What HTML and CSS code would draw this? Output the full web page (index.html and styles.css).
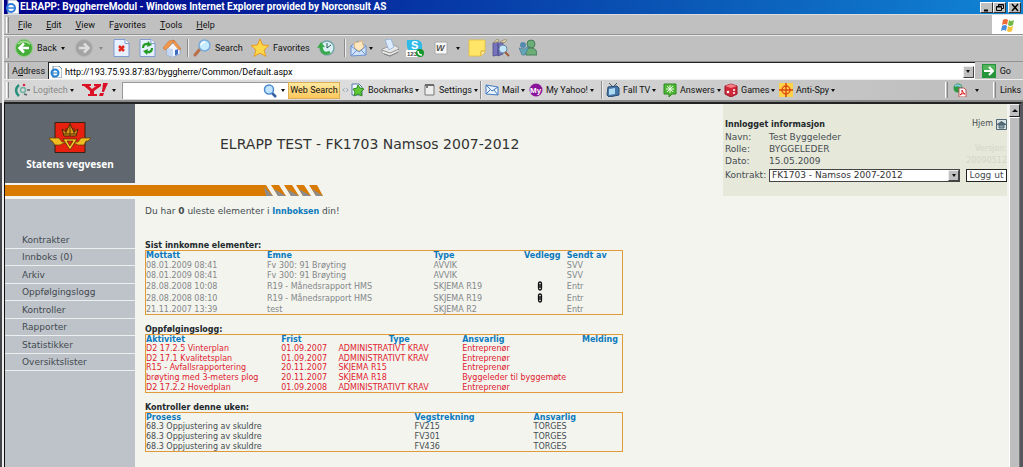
FILE: index.html
```html
<!DOCTYPE html>
<html lang="no">
<head>
<meta charset="utf-8">
<title>ELRAPP: ByggherreModul</title>
<link rel="stylesheet" href="styles.css">
</head>
<body>
<div class="desktop">
<div class="window">
  <header class="titlebar">
    <svg class="i14" viewBox="0 0 14 14"><path d="M3 0h8l3 3v11H3z" fill="#fff" stroke="#9ab"/><circle cx="6" cy="8" r="4" fill="none" stroke="#2c7be0" stroke-width="2"/><path d="M3 8h6" stroke="#2c7be0" stroke-width="1.5"/></svg>
    <span class="window-title">ELRAPP: ByggherreModul - Windows Internet Explorer provided by Norconsult AS</span>
    <div class="window-buttons">
      <button aria-label="Minimize"><svg viewBox="0 0 10 9"><path d="M2 7.500h4" stroke="#000" stroke-width="2"/></svg></button>
      <button aria-label="Restore"><svg viewBox="0 0 10 9"><path d="M3.500 3V1.500h5v4H7M1.500 3.500h5v4h-5zM1.500 4h5M3.500 2h5" fill="none" stroke="#000"/></svg></button>
      <button class="close" aria-label="Close"><svg viewBox="0 0 10 9"><path d="M2 1l6 7M8 1L2 8" stroke="#000" stroke-width="1.500"/></svg></button>
    </div>
  </header>

  <nav class="menubar">
    <i class="grip"></i>
    <button><u>F</u>ile</button><button><u>E</u>dit</button><button><u>V</u>iew</button><button>F<u>a</u>vorites</button><button><u>T</u>ools</button><button><u>H</u>elp</button>
    <span class="flag"><svg viewBox="0 0 16 16"><path d="M3 3q3-2 5 0L7 8Q5 6 2 8z" fill="#ee6b35"/><path d="M9 3q2 2 5 0l-1 5q-3 2-5 0z" fill="#72b844"/><path d="M2 9q3-2 5 0l-1 5q-2-2-5 0z" fill="#4a8be0"/><path d="M8 9q2 2 5 0l-1 5q-3 2-5 0z" fill="#f6c238"/></svg></span>
  </nav>

  <div class="toolbar">
    <i class="grip"></i>
    <button><svg class="i18" viewBox="0 0 18 18"><circle cx="9" cy="9" r="8.500" fill="#43ad37" stroke="#8fce83"/><path d="M3 5q6-5 12 0" stroke="#9ddb8d" stroke-width="2" fill="none"/><path d="M14 9H5M9 4.500L4.500 9 9 13.500" fill="none" stroke="#fff" stroke-width="2.500"/></svg><span class="back">Back</span><b class="caret"></b></button>
    <button aria-label="Forward"><svg class="i18" viewBox="0 0 18 18"><circle cx="9" cy="9" r="8.500" fill="#a4a4a4" stroke="#b4b4b4"/><path d="M4 9h9M9 4.500L13.500 9 9 13.500" fill="none" stroke="#ddd" stroke-width="2.500"/></svg><b class="caret faded"></b></button>
    <button aria-label="Stop"><svg class="i18" viewBox="0 0 18 18"><path d="M1 .5h11l4 4v13H1z" fill="#e6f0ff" stroke="#7f9bd0"/><path d="M12 .5v4h4" fill="#fff" stroke="#7f9bd0"/><path d="M6 7l5 5M11 7l-5 5" stroke="#e1291c" stroke-width="2.500"/></svg></button>
    <button aria-label="Refresh"><svg class="i18" viewBox="0 0 18 18"><path d="M1 .5h11l4 4v13H1z" fill="#e6f0ff" stroke="#7f9bd0"/><path d="M12 .5v4h4" fill="#fff" stroke="#7f9bd0"/><path d="M4 9q0-5 6-4M13 9q0 5-6 4" fill="none" stroke="#269b26" stroke-width="2.200"/><path d="M9 2l4 4-5 2zM8 16l-4-4 5-2z" fill="#269b26"/></svg></button>
    <button aria-label="Home"><svg class="i18" viewBox="0 0 18 18"><path d="M4 9l7-6 6 6v6l-7 3-6-2z" fill="#f1f6ff" stroke="#7f99c8" stroke-width=".7"/><path d="M10 10v8l-6-2V9z" fill="#c4d7f2"/><path d="M0 9l6-7 5-1-5 7-4 3zM11 1l7 9-2 1-6-7z" fill="#f2994c" stroke="#c96f35" stroke-width=".6"/><path d="M12 11l3-.8v5l-3 1.300z" fill="#3b6cc0"/></svg></button>
    <i class="rule"></i>
    <button><svg class="i18" viewBox="0 0 18 18"><path d="M7 10l-5 6" stroke="#b86f49" stroke-width="3" stroke-linecap="round"/><circle cx="11.500" cy="6.500" r="5.500" fill="#c5edff" stroke="#79abd8" stroke-width="1.500"/><path d="M8 6q1-3 4-3" stroke="#fff" stroke-width="1.500" fill="none"/></svg><span>Search</span></button>
    <button><svg class="i18" viewBox="0 0 18 18"><path d="M9 0l2.500 6 6.500.5-5 4.500 2 6.500L9 14l-6 3.500L5 11 0 6.500 6.500 6z" fill="#ffd84a" stroke="#e89b22"/></svg><span>Favorites</span></button>
    <button aria-label="History"><svg class="i18" viewBox="0 0 18 18"><circle cx="10" cy="9" r="7" fill="#d9f1f6" stroke="#77a6a8" stroke-width="1.500"/><path d="M10 4v5l4-3" fill="none" stroke="#355"/><path d="M13 13Q5 17 4 7" fill="none" stroke="#37a946" stroke-width="3"/><path d="M0 9l4-6 4 5z" fill="#37a946"/></svg></button>
    <i class="rule"></i>
    <button aria-label="Mail"><svg class="i18" viewBox="0 0 18 18"><path d="M1 7l7-5 8 5v9l-15 1z" fill="#cfe3ff" stroke="#6b91cc"/><path d="M4 4l8-2 2 7-5 3-4-2z" fill="#ffe8c0" stroke="#dfb579"/><path d="M1 7l8 6 7-6M1 17l6-6M16 16l-5-5" fill="none" stroke="#6b91cc"/></svg><b class="caret tight"></b></button>
    <button aria-label="Print"><svg class="i18" viewBox="0 0 18 18"><path d="M1 10l12-4 5 3v4l-9 4-8-3z" fill="#e8e8e8" stroke="#888" stroke-width=".7"/><path d="M4 1l6-1 3 8-5 3z" fill="#dcecff" stroke="#87a9d9" stroke-width=".7"/><path d="M1 11l8 3 9-4M3 15l6 2 8-4" fill="none" stroke="#777" stroke-width=".8"/></svg></button>
    <button aria-label="Skype"><svg class="i18" viewBox="0 0 18 18"><path d="M1 1h7q6-1 8 4v7H3Q0 8 1 1z" fill="#31b9e8"/><text x="5" y="10" class="svg-bold" font-size="11" fill="#fff">S</text><path d="M0 11h12v7H0z" fill="#fff"/><text x="1" y="17" class="svg-bold" font-size="6" fill="#444">123</text><circle cx="14" cy="14" r="4" fill="#17962c"/><path d="M12 12q0 4 4 4" stroke="#fff" stroke-width="1.500" fill="none"/></svg></button>
    <button aria-label="Word"><svg class="i14" viewBox="0 0 14 14"><path d="M1 1h12v12H1z" fill="#f7f7f7" stroke="#aaa"/><text x="2" y="10" class="svg-bold" font-size="9" font-style="italic" fill="#555">W</text></svg><b class="caret far"></b></button>
    <button aria-label="Note"><svg class="i18" viewBox="0 0 18 18"><path d="M1 1h16v12l-4 4H1z" fill="#ffe669" stroke="#e5bd37" stroke-width=".8"/><path d="M17 12h-4v5" fill="#fff4a8" stroke="#d7a728"/></svg></button>
    <button aria-label="Research"><svg class="i18" viewBox="0 0 18 18"><path d="M1 4l5-2v14l-5 1zM6 5l5-3v13l-5 2z" fill="#7774bd" stroke="#4b4c8c" stroke-width=".8"/><path d="M1 4l4-4 2 1-1 2zM8 3l5-3 2 1-3 3z" fill="#d9cba0" stroke="#877b62" stroke-width=".6"/><circle cx="11" cy="10" r="4" fill="#c4e5fa" stroke="#6888a5"/><path d="M13 13l4 4" stroke="#9d5b39" stroke-width="2"/></svg></button>
    <button aria-label="Messenger"><svg class="i18" viewBox="0 0 18 18"><circle cx="12" cy="5" r="4" fill="#6dad78" stroke="#477d56"/><path d="M7 16q-2-7 5-7 6 0 6 7z" fill="#6dad78" stroke="#477d56"/><circle cx="4" cy="6" r="3" fill="#558aaf"/><path d="M0 9l5 1 5-3-2 5-2 4H3z" fill="#66a5b8" stroke="#3f728d" stroke-width=".6"/></svg></button>
  </div>

  <form class="addressbar">
    <i class="grip"></i>
    <label for="address">A<u>d</u>dress</label>
    <div class="address-box">
      <svg class="i12" viewBox="0 0 12 12"><path d="M3 0h6l3 3v9H3z" fill="#fff" stroke="#789"/><circle cx="5" cy="7" r="3.500" fill="none" stroke="#2683d4" stroke-width="2"/><path d="M2 7h6" stroke="#2683d4"/></svg>
      <input id="address" value="http://193.75.93.87:83/byggherre/Common/Default.aspx">
      <button type="button" class="drop" aria-label="Show addresses"><b class="caret"></b></button>
    </div>
    <button type="button" class="go"><svg class="i14" viewBox="0 0 14 14"><path d="M0 0h14v14H0z" fill="#26943a"/><path d="M1 1h12v5H1z" fill="#52b55b"/><path d="M2 7h9M7 3l4 4-4 4" fill="none" stroke="#fff" stroke-width="2"/></svg><span>Go</span></button>
  </form>

  <div class="linkbar">
    <i class="grip"></i>
    <button class="muted"><svg class="i16" viewBox="0 0 16 16"><path d="M5 3Q-1 8 5 14" fill="none" stroke="#278f7b" stroke-width="2.500"/><circle cx="9" cy="8" r="2.500" fill="none" stroke="#6fb5a5" stroke-width="1.500"/><circle cx="10" cy="3" r="1.300" fill="#d24"/><path d="M10 12l3 1M13 8h3" stroke="#566" stroke-width="1.500"/></svg><span>Logitech</span><b class="caret"></b></button>
    <button aria-label="Yahoo"><svg class="yahoo" viewBox="0 0 26 14"><path d="M0 1h9v2H7l3 3 4-3h-2V1h7v2l-7 5v3h3v2H6v-2h2V8L2 3H0z" fill="#db1026"/><path d="M21 0h5l-4 9h-2zM18 10h4l-1 3h-4z" fill="#db1026"/></svg><b class="caret"></b></button>
    <div class="search-box"><input aria-label="Search the web"><svg class="i14" viewBox="0 0 14 14"><path d="M9 9l4 4" stroke="#345f9f" stroke-width="2.500"/><circle cx="6" cy="5.500" r="4.500" fill="#c3e4ff" stroke="#4c8ad0" stroke-width="1.500"/></svg><b class="caret"></b></div>
    <button class="web-search">Web Search</button>
    <svg class="splitter" viewBox="0 0 10 8"><path d="M4 2L2 4l2 2M6 2l2 2-2 2" fill="none" stroke="#8f9cae"/></svg>
    <button><svg class="i14" viewBox="0 0 14 14"><path d="M1 1h7l3 3v8H1z" fill="#f4f7ff" stroke="#5979a5"/><path d="M7 2l2 3 4 1-3 3 1 4-4-2-4 2 1-4-2-3 4-1z" fill="#61c836" stroke="#2d8c22"/></svg><span>Bookmarks</span><b class="caret"></b></button>
    <button><svg class="i12" viewBox="0 0 12 12"><path d="M1 1h9v10H1z" fill="#eee" stroke="#777"/><path d="M1 1h9M2 3h2" stroke="#555" stroke-width="1.500"/></svg><span>Settings</span><b class="caret tight"></b></button>
    <i class="rule"></i>
    <button><svg class="i14" viewBox="0 0 14 14"><path d="M1 2l12 2v8L1 11z" fill="#eaf4ff" stroke="#477bbd"/><path d="M1 2l6 6 6-4M1 11l4-4M13 12L9 7" fill="none" stroke="#477bbd"/></svg><span>Mail</span><b class="caret"></b></button>
    <button><svg class="i14" viewBox="0 0 14 14"><circle cx="7" cy="7" r="6.500" fill="#8a149a"/><text x="1" y="10" class="svg-bold" font-size="8" fill="#fff">My</text></svg><span>My Yahoo!</span><b class="caret"></b></button>
    <i class="rule"></i>
    <button><svg class="i14" viewBox="0 0 14 14"><path d="M3 0l4 4 4-4" fill="none" stroke="#456"/><path d="M2 4l9-1 2 2v7l-10 2-2-2z" fill="#4676a8" stroke="#294c73"/><path d="M3 6l6-1v6l-6 1z" fill="#add9f2"/></svg><span>Fall TV</span><b class="caret"></b></button>
    <button><svg class="i14" viewBox="0 0 14 14"><path d="M1 1h12v10H9l-3 3v-3H1z" fill="#51b837" stroke="#298820"/><path d="M7 2v8M3 6h8M4 3l6 6M10 3L4 9" stroke="#efffe8"/></svg><span>Answers</span><b class="caret"></b></button>
    <button><svg class="i14" viewBox="0 0 14 14"><path d="M7 1l6 2v8l-6 3-6-3V3z" fill="#cf2939" stroke="#9a1424"/><path d="M1 3l6 2 6-2-6-2z" fill="#f48086"/><circle cx="4" cy="9" r="1.300" fill="#fff"/><circle cx="10" cy="7" r="1" fill="#fff"/><circle cx="10" cy="10" r="1" fill="#fff"/></svg><span>Games</span><b class="caret"></b></button>
    <button><svg class="i14" viewBox="0 0 14 14"><path d="M0 0h14v14H0z" fill="#ffd247"/><circle cx="7" cy="7" r="4" fill="none" stroke="#e25016" stroke-width="1.500"/><path d="M7 0v14M0 7h14" stroke="#d94812" stroke-width="1.500"/></svg><span>Anti-Spy</span><b class="caret tight"></b></button>
    <i class="grip"></i>
    <button aria-label="Convert"><svg class="i14" viewBox="0 0 14 14"><circle cx="5" cy="5" r="4.500" fill="#2c9a43"/><path d="M2 3q4-2 6 1" stroke="#8cc4ed" stroke-width="2" fill="none"/><path d="M6 5h5l2 2v7H6z" fill="#fff" stroke="#b55"/><path d="M7 12q3-2 2-5 1 3 3 4-3-1-5 1" fill="none" stroke="#d22"/></svg><b class="caret far"></b></button>
    <i class="grip"></i>
    <span class="links">Links</span>
  </div>

  <div class="viewport">
    <div class="page">
      <header class="page-header">
        <div class="brand">
          <svg class="crest" viewBox="0 0 42 31"><path d="M6 .5h30v30H6z" fill="#e8200f" stroke="#321"/><path d="M0 16h10l3 4h16l3-4h10l-3 3h-2l-2 4h-6l-4-2H15l-4 2H6l-3-4H2z" fill="#f0bd20" stroke="#5b3b08" stroke-width=".7"/><path d="M13 7l2 7h12l2-7-4 3-4-8-4 8z" fill="#d99a18" stroke="#4b2608" stroke-width="1"/><path d="M21 1v13M14 12h14M17 6v6M25 6v6" stroke="#5b3006"/><path d="M14 17h14l-7 11z" fill="#f4c429" stroke="#432708" stroke-width=".7"/><path d="M18 19h6l-3 5z" fill="#e8200f" stroke="#432708" stroke-width=".6"/></svg>
          <span>Statens vegvesen</span>
        </div>
        <h1>ELRAPP TEST - FK1703 Namsos 2007-2012</h1>
        <div class="stripe"><svg viewBox="0 0 64 11"><path d="M0 0h7l7 11H0zM12 0h8l7 11h-8zM25 0h8l7 11h-8zM37 0h8l7 11h-8zM50 0h8l6 11h-7z" fill="#d97b00"/><path d="M5 2l9 9H7zM15 4l12 7h-8zM28 4l12 7h-8zM40 4l12 7h-8zM53 4l11 7h-7z" fill="#8c8c8c"/></svg></div>
        <section class="session">
          <h2>Innlogget informasjon</h2>
          <a class="home" href="#">Hjem <svg viewBox="0 0 11 11"><path d="M.5.5h10v10H.5z" fill="#dbe5e6" stroke="#526875"/><path d="M1 5l4.500-3L10 5v1H1z" fill="#526875"/><path d="M3 6h5v3H3z" fill="#8ca0aa" stroke="#526875"/></svg></a>
          <span>Navn:</span><span>Test Byggeleder</span><span></span>
          <span>Rolle:</span><span>BYGGELEDER</span><span class="version">Versjon:</span>
          <span>Dato:</span><span>15.05.2009</span><span class="version">20090512</span>
          <label for="contract">Kontrakt:</label>
          <div class="contract"><select id="contract"><option>FK1703 - Namsos 2007-2012</option></select><span class="drop"><b class="caret"></b></span></div>
          <button class="logout">Logg ut</button>
        </section>
      </header>
      <nav class="sidebar">
        <a href="#">Kontrakter</a><a href="#">Innboks (0)</a><a href="#">Arkiv</a><a href="#">Oppfølgingslogg</a><a href="#">Kontroller</a><a href="#">Rapporter</a><a href="#">Statistikker</a><a href="#">Oversiktslister</a>
      </nav>
      <main>
        <p>Du har <b>0</b> uleste elementer i <a href="#">Innboksen</a> din!</p>
        <section>
          <h2>Sist innkomne elementer:</h2>
          <table class="inbox">
            <colgroup><col class="c25"><col class="c35"><col class="c19"><col class="c9"><col></colgroup>
            <thead><tr><th>Mottatt</th><th>Emne</th><th>Type</th><th>Vedlegg</th><th>Sendt av</th></tr></thead>
            <tbody>
            <tr><td>08.01.2009 08:41</td><td>Fv 300: 91 Brøyting</td><td>AVVIK</td><td></td><td>SVV</td></tr>
            <tr><td>08.01.2009 08:41</td><td>Fv 300: 91 Brøyting</td><td>AVVIK</td><td></td><td>SVV</td></tr>
            <tr class="tall"><td>28.08.2008 10:08</td><td>R19 - Månedsrapport HMS</td><td>SKJEMA R19</td><td class="clip"><svg viewBox="0 0 6 10"><path d="M1.500 3v4q0 2 1.500 2t1.500-2V3Q4.500 1 3 1T1.500 3M3 3v4" fill="none" stroke="#111" stroke-width="1.300"/></svg></td><td>Entr</td></tr>
            <tr class="tall"><td>28.08.2008 08:10</td><td>R19 - Månedsrapport HMS</td><td>SKJEMA R19</td><td class="clip"><svg viewBox="0 0 6 10"><path d="M1.500 3v4q0 2 1.500 2t1.500-2V3Q4.500 1 3 1T1.500 3M3 3v4" fill="none" stroke="#111" stroke-width="1.300"/></svg></td><td>Entr</td></tr>
            <tr><td>21.11.2007 13:39</td><td>test</td><td>SKJEMA R2</td><td></td><td>Entr</td></tr>
            </tbody>
          </table>
        </section>
        <section>
          <h2>Oppfølgingslogg:</h2>
          <table class="followup">
            <colgroup><col class="c28"><col class="c12"><col class="c26"><col class="c22"><col></colgroup>
            <thead><tr><th>Aktivitet</th><th>Frist</th><th class="center">Type</th><th>Ansvarlig</th><th class="right">Melding</th></tr></thead>
            <tbody>
            <tr><td>D2 17.2.5 Vinterplan</td><td>01.09.2007</td><td>ADMINISTRATIVT KRAV</td><td>Entreprenør</td><td></td></tr>
            <tr><td>D2 17.1 Kvalitetsplan</td><td>01.09.2007</td><td>ADMINISTRATIVT KRAV</td><td>Entreprenør</td><td></td></tr>
            <tr><td>R15 - Avfallsrapportering</td><td>20.11.2007</td><td>SKJEMA R15</td><td>Entreprenør</td><td></td></tr>
            <tr><td>brøyting med 3-meters plog</td><td>20.11.2007</td><td>SKJEMA R18</td><td>Byggeleder til byggemøte</td><td></td></tr>
            <tr><td>D2 17.2.2 Hovedplan</td><td>01.09.2008</td><td>ADMINISTRATIVT KRAV</td><td>Entreprenør</td><td></td></tr>
            </tbody>
          </table>
        </section>
        <section>
          <h2>Kontroller denne uken:</h2>
          <table class="checks">
            <colgroup><col class="c56"><col class="c25"><col></colgroup>
            <thead><tr><th>Prosess</th><th>Vegstrekning</th><th>Ansvarlig</th></tr></thead>
            <tbody>
            <tr><td>68.3 Oppjustering av skuldre</td><td>FV215</td><td>TORGES</td></tr>
            <tr><td>68.3 Oppjustering av skuldre</td><td>FV301</td><td>TORGES</td></tr>
            <tr><td>68.3 Oppjustering av skuldre</td><td>FV436</td><td>TORGES</td></tr>
            </tbody>
          </table>
        </section>
      </main>
    </div>
    <div class="scrollbar"><button aria-label="Scroll up"><b class="caret up"></b></button><i class="thumb"></i></div>
  </div>
</div>
</div>
</body>
</html>
```
FILE: styles.css
```css
* { box-sizing: border-box; }
body { margin: 0; background: #f3f4ee; font: 9px/12px Roboto, "Liberation Sans", sans-serif; color: #111; }
svg { display: block; flex: none; }
button { appearance: none; border: 0; padding: 0; margin: 0; background: none; font: inherit; color: inherit; display: flex; align-items: center; white-space: nowrap; }
input { appearance: none; border: 0; padding: 0; background: none; font: inherit; min-width: 0; outline: 0; }
a { color: inherit; text-decoration: none; }
.desktop { min-height: 100vh; display: flex; background: linear-gradient(#b9b9b9 103px, #46474c 103px); }
.window { flex: 1; min-width: 0; margin-left: 2px; border-left: 2px solid #eee; display: flex; flex-direction: column; background: #c0c0c0; }
.i12 { width: 12px; height: 12px; }
.i14 { width: 14px; height: 14px; }
.i16 { width: 16px; height: 16px; }
.i18 { width: 18px; height: 18px; }
.svg-bold { font-family: "Liberation Sans", sans-serif; font-weight: bold; }
.caret { flex: none; border: 2px solid transparent; border-top: 3px solid #111; border-bottom: 0; margin-left: 4px; }
.caret.tight { margin-left: 1px; }
.caret.far { margin-left: 8px; }
.caret.faded { border-top-color: #888; margin-left: 6px; }
.caret.up { border: 3px solid transparent; border-bottom: 3px solid #111; border-top: 0; margin: 0; }
.grip { width: 3px; height: 16px; border-left: 1px solid #fff; border-right: 1px solid #858585; }
.rule { width: 2px; height: 18px; border-left: 1px solid #8b8b8b; border-right: 1px solid #eee; }

.titlebar { height: 14px; display: flex; align-items: center; gap: 1px; padding: 0 2px 0 1px; background: linear-gradient(90deg, #00008a, #0a55b5 65%, #1185d4); color: #fff; font-size: 10px; font-weight: 700; }
.window-title { flex: 1; white-space: nowrap; }
.window-buttons { display: flex; }
.window-buttons button { width: 13px; height: 11px; justify-content: center; background: #c0c0c0; border: 1px solid; border-color: #fff #333 #333 #fff; }
.window-buttons svg { width: 10px; height: 9px; }
.window-buttons .close { margin-left: 2px; }

.menubar { height: 20px; display: flex; align-items: center; gap: 14px; border-top: 1px solid #ddd; padding-left: 2px; }
.menubar .grip { margin-right: -5px; }
.flag { margin-left: auto; width: 31px; height: 19px; background: #fff; display: flex; justify-content: center; align-items: center; }
.flag svg { width: 16px; height: 16px; }

.toolbar { height: 28px; display: grid; grid-template-columns: 9px 60px 38px 26px 24px 24px 6px 58px 66px 27px 6px 31px 25px 28px 34px 24px 27px 1fr; align-items: center; padding-left: 2px; border-top: 1px solid #929292; border-bottom: 1px solid #929292; box-shadow: inset 0 1px #e8e8e8; }
.toolbar .grip { height: 20px; }
.toolbar span { margin-left: 4px; }

.addressbar { height: 17px; display: flex; align-items: center; gap: 3px; padding-left: 2px; }
.address-box { flex: 1; height: 17px; display: flex; align-items: center; gap: 3px; padding: 1px 1px 0 1px; background: #fff; border-top: 1px solid #222; border-left: 1px solid #222; }
.address-box input { flex: 1; }
.drop { width: 11px; height: 12px; display: flex; align-items: center; justify-content: center; background: #c0c0c0; border: 1px solid; border-color: #eee #444 #444 #eee; }
.drop .caret { margin: 0; }
.go { gap: 4px; margin: 0 12px 0 4px; }

.linkbar { height: 23px; display: grid; grid-template-columns: 8px 68px 40px 166px 52px 11px 73px 56px 5px 44px 72px 5px 57px 61px 55px 1fr 8px 40px 4px 23px; align-items: center; padding: 0 3px 0 2px; border-top: 1px solid #eee; border-bottom: 2px solid #888; background: linear-gradient(90deg, #d6d6d6, #dedede 40%, #c0c0c0 90%); }
.linkbar span { margin-left: 3px; }
.linkbar span + .caret { margin-left: 2px; }
.muted { color: #888; }
.yahoo { width: 26px; height: 14px; }
.search-box { height: 17px; display: flex; align-items: center; background: #fff; border-top: 1px solid #999; border-left: 1px solid #999; padding-right: 3px; }
.search-box input { flex: 1; }
.web-search { height: 17px; justify-content: center; background: linear-gradient(#ffe9a0, #fdc75b); border: 1px solid #d9ae55; }
.splitter { width: 9px; height: 8px; margin-left: 1px; }

.viewport { flex: 1; display: flex; border-top: 2px solid #222; border-left: 1px solid #111; border-right: 3px solid #55585e; background: #f3f4ee; font-family: "DejaVu Sans", sans-serif; font-size: 8px; line-height: 12px; }
.page { flex: 1; display: grid; grid-template-columns: 130px 1fr; grid-template-rows: auto 1fr; row-gap: 3px; }
.page-header { grid-column: 1 / -1; display: grid; grid-template-columns: 130px 1fr 284px; grid-template-rows: 79px 11px; row-gap: 2px; }
.brand { background: #60676f; color: #fff; display: flex; flex-direction: column; align-items: center; justify-content: flex-end; gap: 5px; padding-bottom: 13px; font: 700 10px/12px "Noto Sans", sans-serif; }
.crest { width: 42px; height: 31px; }
h1 { margin: 0; align-self: center; padding-left: 85px; font-size: 14px; font-weight: 400; line-height: 18px; color: #333; white-space: nowrap; }
.stripe { grid-row: 2; grid-column: 1 / 3; width: 318px; display: flex; justify-content: flex-end; background: linear-gradient(#d97b00, #d97b00) no-repeat 0 0 / 254px 100%; }
.stripe svg { width: 64px; height: 11px; }
.session { grid-column: 3; grid-row: 1 / 3; background: #e6e8da; color: #454c50; display: grid; grid-template-columns: 44px 191px 1fr; grid-template-rows: 14px 12px 12px 12px 16px; align-items: center; align-content: start; padding: 13px 0 0 2px; font-size: 9px; white-space: nowrap; }
.session h2 { grid-column: 1 / 3; }
h2 { margin: 0; font-size: 8px; line-height: 9px; font-weight: 700; color: #22282c; }
.home { display: flex; gap: 3px; justify-content: flex-end; align-items: center; font-size: 8px; }
.home svg { width: 11px; height: 11px; }
.version { text-align: right; color: #d3d7c6; font-size: 8px; }
.contract { position: relative; }
.contract select { appearance: none; display: block; width: 100%; height: 13px; border: 1px solid #444; border-radius: 0; background: #fff; padding: 0 2px; font: inherit; line-height: 11px; color: #333; }
.contract .drop { position: absolute; right: 1px; top: 1px; height: 11px; }
.logout { justify-self: end; width: 41px; height: 13px; justify-content: center; background: #fff; border: 1px solid #222; font-size: 9px; }

.sidebar { background: #bec3c9; padding-top: 32px; color: #42494f; font-size: 9px; display: grid; grid-auto-rows: 18px 17px; align-content: start; }
.sidebar a { display: flex; align-items: center; padding-left: 17px; border-bottom: 1px solid #eceff0; }

main { padding: 6px 10px; color: #454c50; }
main p { margin: 0 0 23px; font-size: 9px; }
main p a { color: #0b7abd; font-weight: 700; font-size: 8px; }
main section { margin-bottom: 10px; max-width: 478px; }
table { width: 100%; table-layout: fixed; border-collapse: separate; border-spacing: 0; border: 1px solid #e09a3a; line-height: 9px; white-space: nowrap; }
th, td { padding: 0; text-align: left; }
th + th, td + td { padding-left: 2px; }
th { color: #0b7abd; font-weight: 700; }
th.center { text-align: center; }
th.right { text-align: right; padding-right: 4px; }
.inbox { height: 65px; color: #83878a; }
.tall { height: 12px; }
.clip svg { width: 6px; height: 10px; margin-left: 13px; }
.followup { height: 59px; color: #e0222e; }
.checks { height: 40px; }
.c9 { width: 9%; }
.c12 { width: 12%; }
.c19 { width: 19%; }
.c22 { width: 22%; }
.c25 { width: 25%; }
.c26 { width: 26%; }
.c28 { width: 28%; }
.c35 { width: 35%; }
.c56 { width: 56%; }

.scrollbar { width: 11px; margin-left: 2px; background: #d9d9d9; }
.scrollbar button { width: 11px; height: 13px; justify-content: center; background: #c0c0c0; border: 1px solid; border-color: #eee #222 #222 #eee; }
.thumb { display: block; height: calc(100% - 13px); background: #bebebe; border: 1px solid; border-color: #fff #777 #777 #fff; }
```
